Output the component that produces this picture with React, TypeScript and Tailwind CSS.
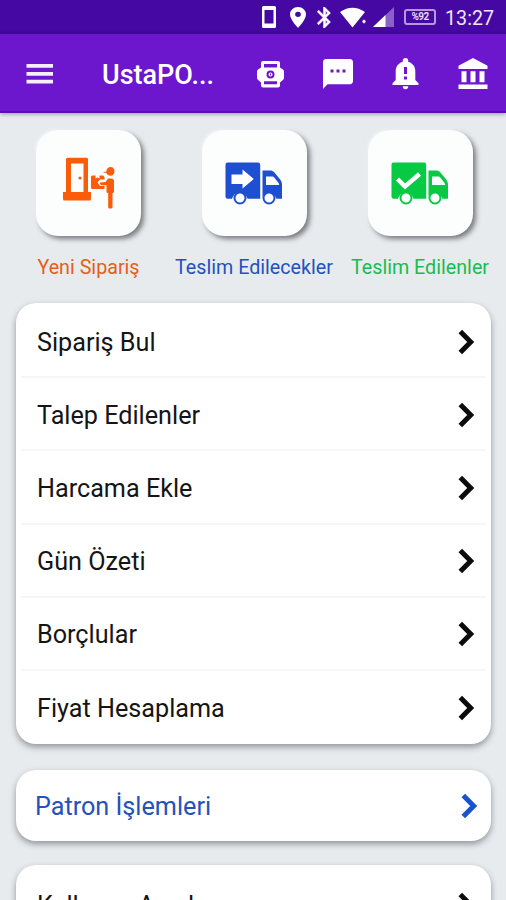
import type { ReactNode } from "react";

function StatusBar() {
  return (
    <div className="h-[34px] bg-[#4508a3] flex items-center pl-[261px] text-white shrink-0">
      <svg width="16" height="24" viewBox="0 0 16 24" fill="#fff" className="shrink-0">
        <path fillRule="evenodd" d="M2.500 1h11A1.500 1.500 0 0 1 15 2.500v19a1.500 1.500 0 0 1-1.500 1.500h-11A1.500 1.500 0 0 1 1 21.500v-19A1.500 1.500 0 0 1 2.500 1zM3.500 5v13.500h9V5z" />
      </svg>
      <svg width="16" height="21" viewBox="5 2 14 20" fill="#fff" preserveAspectRatio="none" className="ml-[13px] mt-[1px] shrink-0">
        <path d="M12 2C8.130 2 5 5.130 5 9c0 5.250 7 13 7 13s7-7.750 7-13c0-3.870-3.130-7-7-7zm0 9.500a2.500 2.500 0 0 1 0-5 2.500 2.500 0 0 1 0 5z" />
      </svg>
      <svg width="14" height="21" viewBox="5 2 13 20" fill="#fff" stroke="#fff" strokeWidth=".5" className="ml-[11px] mt-[1px] shrink-0">
        <path d="M17.710 7.710L12 2h-1v7.590L6.410 5 5 6.410 10.590 12 5 17.590 6.410 19 11 14.410V22h1l5.710-5.710-4.300-4.290 4.300-4.290zM13 5.830l1.880 1.880L13 9.590V5.830zm1.880 10.460L13 18.170v-3.760l1.880 1.880z" />
      </svg>
      <svg width="27" height="22" viewBox="0 0 27 22" fill="#fff" className="ml-[9px] mt-[1px] shrink-0">
        <path d="M0 5Q12.500-3.500 25 5L12.500 20.500z" />
        <circle cx="24" cy="14.500" r="1.900" stroke="#4508a3" strokeWidth=".6" />
      </svg>
      <svg width="21" height="20" viewBox="0 0 21 20" className="ml-[6px] shrink-0">
        <path d="M21 0v20H0z" fill="#8b61c9" />
        <path d="M12.500 8v12H0z" fill="#fff" />
      </svg>
      <div className="ml-[10px] w-[32px] h-[16px] shrink-0 rounded-[3px] border-2 border-[#b39adb] flex items-center justify-center font-bold text-[10px] leading-none tracking-[-0.6px] text-[#e6dcf5]">
        %92
      </div>
      <div className="ml-[9px] text-[19.700px] leading-[34px] pt-[3px] text-[#efe7fa]">13:27</div>
    </div>
  );
}

function Header() {
  return (
    <header className="h-[79px] pt-[2px] bg-[#6c17ce] border-b-2 border-[#5b0fb4] flex items-center text-white shrink-0 shadow-[0_1px_4px_rgba(0,0,0,0.35)]">
      <svg width="27" height="20" viewBox="0 0 27 20" fill="#f5effd" className="ml-[26px] shrink-0">
        <path d="M.5 0h26.500v3.800H.5zM.5 7.900h26.500v3.800H.5zM.5 15.700h26.500v3.800H.5z" />
      </svg>
      <h1 className="ml-[49px] mt-[4px] w-[155px] text-[27px] font-medium leading-none whitespace-nowrap">UstaPO...</h1>
      <svg width="27" height="27" viewBox="0 0 27 27" fill="#fff" className="mt-[1px] shrink-0">
        <path fillRule="evenodd" d="M6 0h15a2 2 0 0 1 2 2v4.500l3 2a2.500 2.500 0 0 1 1 2v6c0 1-.4 2-1.200 2.600L23 21.500V24.500a2 2 0 0 1-2 2H6a2 2 0 0 1-2-2v-3l-2.800-2.400A3.400 3.400 0 0 1 0 16.500v-6a2.500 2.500 0 0 1 1-2l3-2V2a2 2 0 0 1 2-2zM7 3v3.500h13V3zM7 20.200v3h13v-3z" />
        <circle cx="13.500" cy="13.500" r="3" fill="none" stroke="#6c17ce" strokeWidth="2" />
        <path d="M13.500 12.500v2" stroke="#6c17ce" />
      </svg>
      <svg width="30" height="30" viewBox="2 2 20 20" fill="#fff" className="ml-[39px] mt-[1px] shrink-0">
        <path d="M20 2H4c-1.100 0-2 .9-2 2v18l3-3.200h15c1.100 0 2-.9 2-2V4c0-1.100-.9-2-2-2zM9 11H7V9h2v2zm4 0h-2V9h2v2zm4 0h-2V9h2v2z" />
      </svg>
      <svg width="27" height="32" viewBox="0 0 27 32" fill="#fff" className="ml-[39px] shrink-0">
        <path fillRule="evenodd" d="M13.500 0c-1.700 0-2.700 1.100-2.700 2.700v1C6.300 5 3.700 8.800 3.700 13v9L.5 25.200V27h26v-1.800L23.300 22v-9c0-4.200-2.600-8-7.100-9.300v-1C16.200 1.100 15.200 0 13.500 0zM12 9h3v7h-3zm0 9.500h3v3h-3zM10.700 28.200h5.600c0 1.700-1.200 3-2.800 3s-2.800-1.300-2.800-3z" />
      </svg>
      <svg width="30" height="32" viewBox="0 0 30 32" fill="#fff" className="ml-[39px] mt-[1px] shrink-0">
        <path d="M15 0L.5 7.800V11h29V7.800zM3.500 13.200h5v11h-5zM12.500 13.200h5v11h-5zM21.500 13.200h5v11h-5zM.5 26.500h29V31H.5z" />
      </svg>
    </header>
  );
}

function DoorIcon() {
  return (
    <svg width="56" height="54" viewBox="60 154 56 54" fill="#fb5c0a">
      <path fillRule="evenodd" d="M65 157.200a1.500 1.500 0 0 1 1.500-1.500h19a1.500 1.500 0 0 1 1.500 1.500V190h3v7a1.500 1.500 0 0 1-1.500 1.500h-25A1.500 1.500 0 0 1 62 197v-7h3zM70 161.500V190h12.500v-28.500z" />
      <circle cx="79" cy="176" r="1.600" />
      <path d="M91.500 173.500h3v3l2-1 2 1v-3h3.500l1.500 1.500v2.500h-4.500l-2.500 3 2.500 3.500h4.500v3H91.500a1.500 1.500 0 0 1-1.500-1.500V175a1.500 1.500 0 0 1 1.500-1.500z" />
      <path d="M101.500 170.300l3.800-.8c.3-3 2-4.500 4.200-4.500 2.600 0 4 2 4 4.300 0 2.700-1.600 4.500-4 4.500-2.100 0-3.500-1.200-4-2.800z" />
      <path d="M107 176.500h3.500c1.500 0 2.500 1 2.500 2.500v10.500a1.500 1.500 0 0 1-1.500 1.500v14a1.500 1.500 0 0 1-1.500 1.500h-1.300a1.500 1.500 0 0 1-1.500-1.500v-14a1.500 1.500 0 0 1-1.700-1.500v-6.200h-4.500l-2.500-1.300.5-1.500 5.500-.5z" />
    </svg>
  );
}

function TruckIcon({ color, children }: { color: string; children: ReactNode }) {
  return (
    <svg width="58" height="44" viewBox="225 161 58 44" fill={color}>
      <path d="M227.500 162.500h30.500a2.200 2.200 0 0 1 2.200 2.200V198.800h-12.700a8 8 0 0 0-15.500 0h-4.500a2 2 0 0 1-2-2v-32.300a2 2 0 0 1 2-2z" />
      <path fillRule="evenodd" d="M262.500 170.500h7.500c2 0 3 .5 4.200 1.800l5.800 7c1.500 2 2 3.500 2 5.500v14h-5.500a8 8 0 0 0-14-2.500zM266 176.500v8.500h13.200c0-1-.4-1.800-1-2.600l-4-4.800c-.7-.8-1.200-1.100-2.200-1.100z" />
      <circle cx="240" cy="198" r="5.500" fill="#fff" stroke={color} strokeWidth="2" />
      <circle cx="269" cy="198" r="5.500" fill="#fff" stroke={color} strokeWidth="2" />
      {children}
    </svg>
  );
}

function Tile({ children }: { children: ReactNode }) {
  return (
    <div className="w-[105px] h-[106px] rounded-[22px] bg-[#fcfdfd] flex items-center justify-center shadow-[3px_3px_5px_rgba(50,50,55,0.6),-1px_-1px_3px_rgba(255,255,255,0.7)]">
      {children}
    </div>
  );
}

function Chevron({ blue = false }: { blue?: boolean }) {
  return (
    <svg width="17" height="26" viewBox="0 0 17 26" fill="none" stroke={blue ? "#1952cf" : "#0b0b0b"} strokeWidth="5" className={"shrink-0 " + (blue ? "" : "mt-[3px]")}>
      <path d="M2.300 2.500L12.700 13L2.300 23.500" />
    </svg>
  );
}

const rows = ["Sipariş Bul", "Talep Edilenler", "Harcama Ekle", "Gün Özeti", "Borçlular", "Fiyat Hesaplama"];

const cardShadow = "shadow-[0_3px_6px_rgba(40,45,50,0.45)]";

export default function App() {
  return (
    <div className="w-[506px] h-[900px] overflow-hidden bg-[#e7ebee] flex flex-col font-['Roboto',sans-serif]">
      <StatusBar />
      <Header />
      <div className="pt-[17px] flex shrink-0">
        <div className="w-[177px] shrink-0 flex flex-col items-center">
          <Tile>
            <DoorIcon />
          </Tile>
          <span className="mt-[20px] text-[19.700px] leading-[24px] text-[#e55f16] whitespace-nowrap">Yeni Sipariş</span>
        </div>
        <div className="w-[154px] shrink-0 flex flex-col items-center">
          <Tile>
            <TruckIcon color="#1d4fd0">
              <path d="M231.500 174.500h11v-5l11.300 9.500-11.300 9.500V184h-11z" fill="#fff" />
            </TruckIcon>
          </Tile>
          <span className="mt-[20px] text-[19.700px] leading-[24px] text-[#2352bd] whitespace-nowrap">Teslim Edilecekler</span>
        </div>
        <div className="w-[178px] shrink-0 flex flex-col items-center">
          <Tile>
            <TruckIcon color="#06c944">
              <path d="M231.500 179l7.500 7.500 14.500-12.500" fill="none" stroke="#fff" strokeWidth="4.500" />
            </TruckIcon>
          </Tile>
          <span className="mt-[20px] text-[19.700px] leading-[24px] text-[#17bd50] whitespace-nowrap">Teslim Edilenler</span>
        </div>
      </div>
      <main className="px-[16px] mt-[23px] w-[507px] flex flex-col shrink-0">
        <div className={"h-[441px] pt-[2px] rounded-[20px] bg-white flex flex-col " + cardShadow}>
          {rows.map((label, i) => (
            <div
              key={label}
              className={"mx-[5px] h-[73.200px] shrink-0 pl-[16px] pr-[11px] pb-[1px] flex items-center justify-between border-b-2 " + (i < 5 ? "border-[#f5f6f8]" : "border-transparent")}
            >
              <span className="mt-[5px] text-[25.200px] leading-[30px] text-[#151515] whitespace-nowrap">{label}</span>
              <Chevron />
            </div>
          ))}
        </div>
        <div className={"mt-[26px] h-[71px] rounded-[20px] bg-white pl-[19px] pr-[13px] flex items-center justify-between " + cardShadow}>
          <span className="mt-[2px] text-[25.200px] leading-[30px] text-[#2352bd] whitespace-nowrap">Patron İşlemleri</span>
          <Chevron blue />
        </div>
        <div className={"mt-[24px] h-[76px] rounded-[20px] bg-white pl-[21px] pr-[16px] flex items-center justify-between " + cardShadow}>
          <span className="mt-[5px] text-[25.200px] leading-[30px] text-[#151515] whitespace-nowrap">Kullanıcı Ayarları</span>
          <Chevron />
        </div>
      </main>
    </div>
  );
}
